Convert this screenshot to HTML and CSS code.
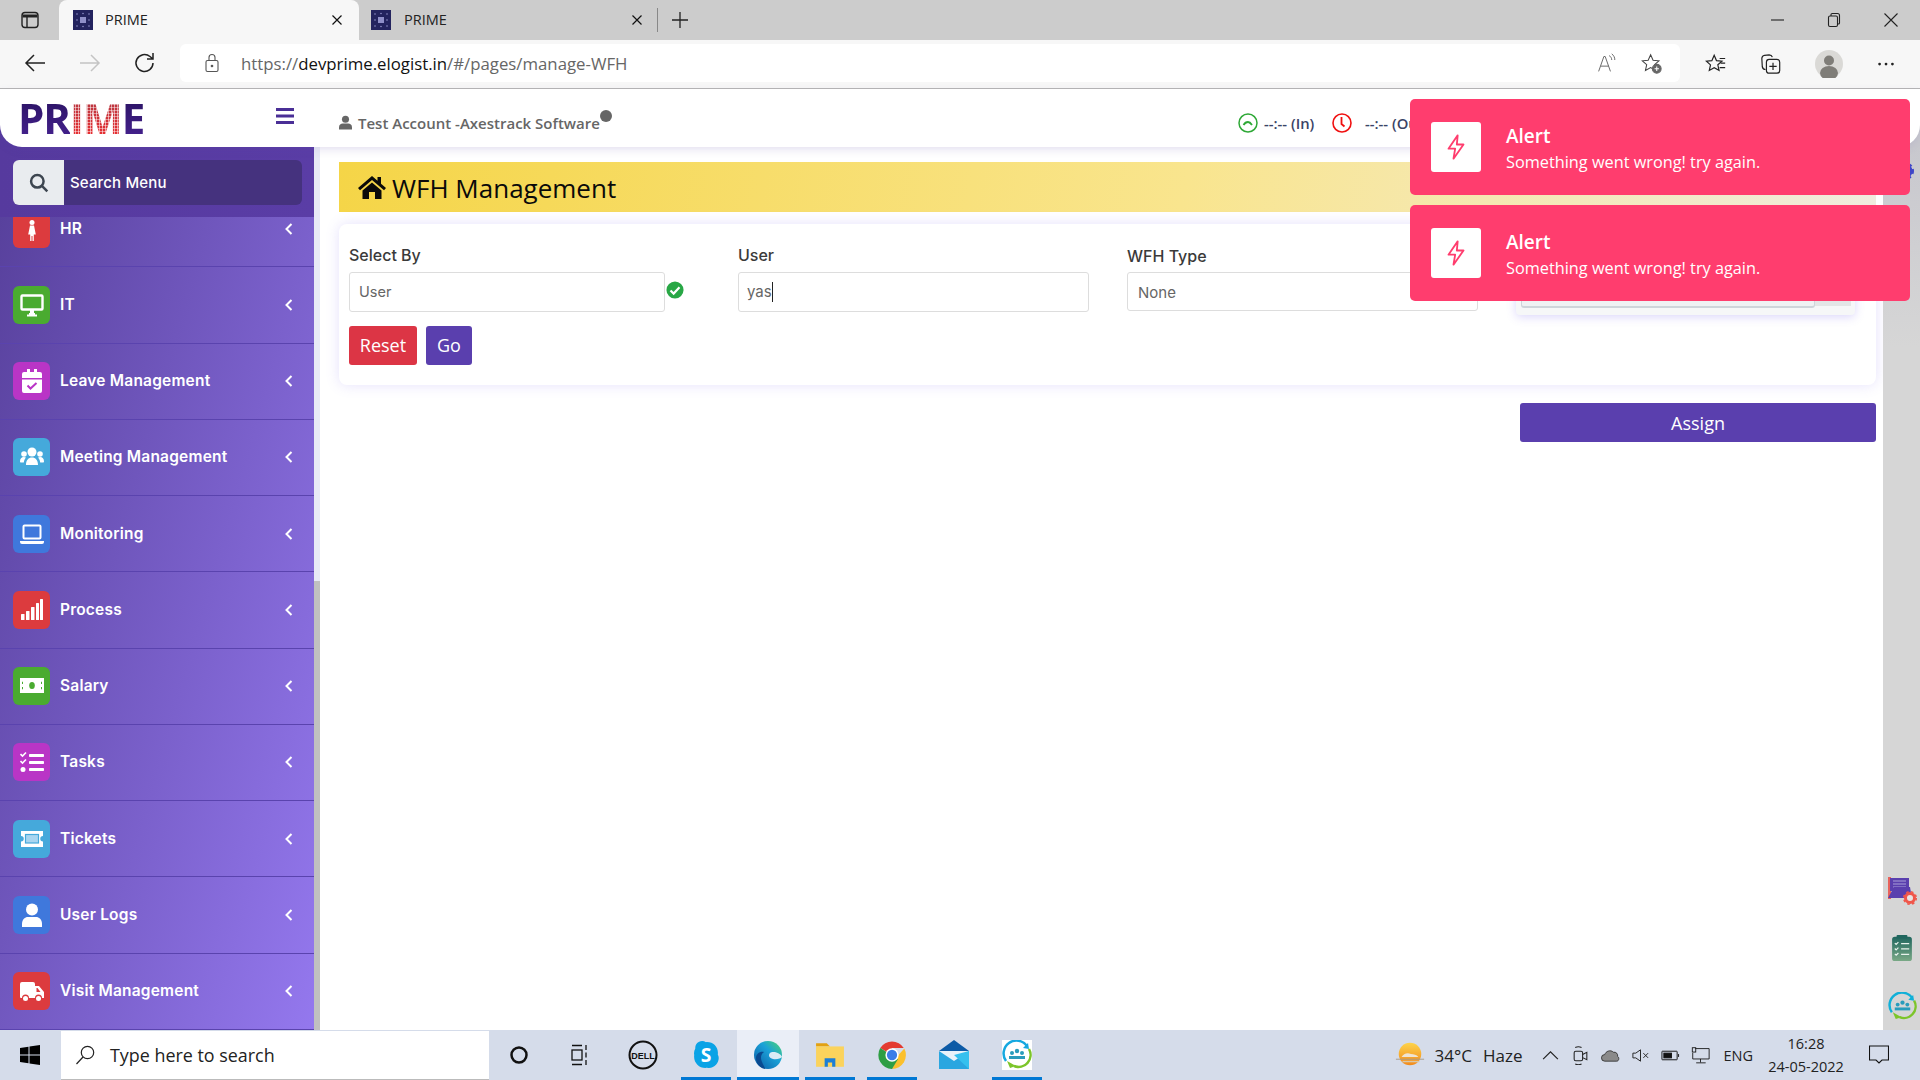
FILE: index.html
```html
<!DOCTYPE html>
<html lang="en">
<head>
<meta charset="utf-8">
<title>PRIME</title>
<link rel="stylesheet" href="styles.css">
</head>
<body>
<div class="tabstrip">
  <div class="tab-side"><svg width="20" height="20" viewBox="0 0 20 20" fill="none" stroke="#222" stroke-width="1.4"><rect x="2" y="2.5" width="16" height="15" rx="3"/><path d="M2.5 6h15" stroke-width="3"/><path d="M7 6v11"/></svg></div>
  <div class="tab tab-active">
    <svg class="favicon" viewBox="0 0 20 20"><rect width="20" height="20" fill="#23235e"/><g fill="#8f8fc8"><rect x="7" y="7" width="6" height="6"/><circle cx="4" cy="4" r=".8"/><circle cx="10" cy="3.5" r=".8"/><circle cx="16" cy="4" r=".8"/><circle cx="4" cy="10" r=".8"/><circle cx="16" cy="10" r=".8"/><circle cx="4" cy="16" r=".8"/><circle cx="10" cy="16.500" r=".8"/><circle cx="16" cy="16" r=".8"/></g></svg>
    <span class="tab-title">PRIME</span>
    <svg class="tab-x" viewBox="0 0 12 12" stroke="#111" stroke-width="1.2"><path d="M1.500 1.500l9 9M10.500 1.500l-9 9"/></svg>
  </div>
  <div class="tab">
    <svg class="favicon" viewBox="0 0 20 20"><rect width="20" height="20" fill="#23235e"/><g fill="#8f8fc8"><rect x="7" y="7" width="6" height="6"/><circle cx="4" cy="4" r=".8"/><circle cx="10" cy="3.5" r=".8"/><circle cx="16" cy="4" r=".8"/><circle cx="4" cy="10" r=".8"/><circle cx="16" cy="10" r=".8"/><circle cx="4" cy="16" r=".8"/><circle cx="10" cy="16.500" r=".8"/><circle cx="16" cy="16" r=".8"/></g></svg>
    <span class="tab-title">PRIME</span>
    <svg class="tab-x" viewBox="0 0 12 12" stroke="#111" stroke-width="1.2"><path d="M1.500 1.500l9 9M10.500 1.500l-9 9"/></svg>
  </div>
  <div class="tab-divider"></div>
  <svg class="tab-plus" viewBox="0 0 18 18" stroke="#222" stroke-width="1.3"><path d="M9 1v16M1 9h16"/></svg>
  <div class="win-controls">
    <svg viewBox="0 0 16 16" stroke="#222" stroke-width="1.1" fill="none"><path d="M2 8h13"/></svg>
    <svg viewBox="0 0 16 16" stroke="#222" stroke-width="1.1" fill="none"><rect x="2.500" y="4" width="9" height="10.500" rx="1.500"/><path d="M5 4V2.700c0-.7.5-1.200 1.200-1.200h5.300c1 0 2 1 2 2v7.500c0 .6-.6 1-1.200 1h-.8"/></svg>
    <svg viewBox="0 0 16 16" stroke="#222" stroke-width="1.1" fill="none"><path d="M1.500 1.500l13 13M14.500 1.500l-13 13"/></svg>
  </div>
</div>

<div class="toolbar">
  <div class="nav-buttons">
    <svg viewBox="0 0 24 24" fill="none" stroke="#222" stroke-width="1.500"><path d="M22 12H3M11 4l-8 8 8 8"/></svg>
    <svg viewBox="0 0 24 24" fill="none" stroke="#c4c4c4" stroke-width="1.500"><path d="M2 12h19M13 4l8 8-8 8"/></svg>
    <svg viewBox="0 0 24 24" fill="none" stroke="#222" stroke-width="1.500"><path d="M20 12a8.500 8.500 0 1 1-3-6.500L20 8M20 2v6h-6"/></svg>
  </div>
  <div class="address">
    <svg class="lock" viewBox="0 0 16 20" fill="none" stroke="#555" stroke-width="1.100"><rect x="2" y="7.500" width="12" height="11" rx="1.500"/><path d="M5 7.500V4.500a3 3 0 0 1 6 0v3"/><circle cx="8" cy="13" r=".8" fill="#555"/></svg>
    <span class="url"><span class="url-dim">https://</span>devprime.elogist.in<span class="url-dim">/#/pages/manage-WFH</span></span>
    <div class="address-icons">
      <svg viewBox="0 0 24 24" fill="none" stroke="#666" stroke-width="1.100"><path d="M3 21 9 4h1.500l6 17M5.500 15h9M15 3c2 1 3 3 3 5M18 1c2.500 2 3.500 4 3.500 7"/></svg>
      <svg viewBox="0 0 24 24" fill="none" stroke="#444" stroke-width="1.200"><path d="M11 2l2.800 6.200 6.700.7-5 4.500 1.400 6.600L11 16.700 5.100 20l1.400-6.600-5-4.500 6.700-.7z"/><circle cx="18" cy="18" r="5" fill="#666" stroke="#666"/><path d="M18 15.500v5M15.500 18h5" stroke="#fff"/></svg>
    </div>
  </div>
  <div class="tool-icons">
    <svg viewBox="0 0 24 24" fill="none" stroke="#222" stroke-width="1.300"><path d="M10 2.500l2.500 5.800 6 .6-4.500 4 1.300 6L10 16l-5.300 3 1.300-6-4.500-4 6-.6z"/><path d="M16 6h6M17 11h5M16 16h6"/></svg>
    <svg viewBox="0 0 24 24" fill="none" stroke="#222" stroke-width="1.300"><path d="M6 18c-2 0-3-1-3.500-3L2 6c0-2 1-3 3-3.500L10 2c2 0 3 1 3.500 2.500"/><rect x="7" y="7" width="14.500" height="15" rx="3"/><path d="M14.200 10.500v8M10.200 14.500h8"/></svg>
    <svg class="avatar" viewBox="0 0 28 28"><circle cx="14" cy="14" r="14" fill="#dad9d6"/><circle cx="14" cy="10.500" r="5" fill="#7f7d78"/><ellipse cx="14" cy="23" rx="9" ry="7" fill="#7f7d78"/></svg>
    <svg viewBox="0 0 24 24" fill="#222"><circle cx="5" cy="12" r="1.500"/><circle cx="12" cy="12" r="1.500"/><circle cx="19" cy="12" r="1.500"/></svg>
  </div>
</div>

<div class="app">
  <header class="app-header">
    <div class="logo"><span class="logo-dark">PR</span><span class="logo-red">IM</span><span class="logo-dark">E</span></div>
    <svg class="hamburger" viewBox="0 0 18 16" fill="#4a2f96"><rect width="18" height="3"/><rect y="6.500" width="18" height="3"/><rect y="13" width="18" height="3"/></svg>
    <div class="account">
      <svg viewBox="0 0 14 15" fill="#666"><circle cx="7" cy="4" r="3.800"/><path d="M0 15v-2.500C0 9.800 2 8.500 4 8.500h6c2 0 4 1.300 4 4V15z"/></svg>
      <span class="account-name">Test Account -Axestrack Software</span><span class="status-dot"></span>
    </div>
    <div class="clock-in">
      <svg viewBox="0 0 20 20" fill="none" stroke="#2ea836" stroke-width="1.500"><circle cx="10" cy="10" r="9"/><path d="M5.500 12c1.500-2.500 3-3 4.500-3s2.500.8 4 3" stroke-width="1.800"/></svg>
      <span>--:-- (In)</span>
    </div>
    <div class="clock-out">
      <svg viewBox="0 0 20 20" fill="none" stroke="#f01010" stroke-width="1.600"><circle cx="10" cy="10" r="9"/><path d="M9.500 4v7l3 2.500" stroke-width="1.800"/></svg>
      <span>--:-- (Out)</span>
    </div>
  </header>

  <div class="app-body">
    <aside class="sidebar">
      <div class="search-block">
        <div class="search">
          <div class="search-btn"><svg viewBox="0 0 24 24" fill="none" stroke="#3d4650" stroke-width="3"><circle cx="10" cy="10" r="7.500"/><path d="M15.500 15.500 22 22"/></svg></div>
          <span>Search Menu</span>
        </div>
      </div>
      <nav class="menu">
        <a class="menu-row"><span class="tile t-red"><svg viewBox="0 0 24 24" fill="#fff"><circle cx="12" cy="5.500" r="2.500"/><path d="M10 8.500h4l1.800 9h-2v6.500h-1.300v-5h-1v5h-1.300v-6.500h-2z"/></svg></span><span class="menu-label">HR</span><svg class="chev" viewBox="0 0 8 12" fill="none" stroke="#fff" stroke-width="2"><path d="M6.500 1 1.500 6l5 5"/></svg></a>
        <a class="menu-row"><span class="tile t-green"><svg viewBox="0 0 24 24" fill="none" stroke="#fff"><rect x="1.500" y="2.500" width="21" height="14" rx="1" stroke-width="2.400"/><path d="M9 21h6M7 22.500h10" stroke-width="2"/><path d="M10 17h4v4h-4z" fill="#fff" stroke="none"/></svg></span><span class="menu-label">IT</span><svg class="chev" viewBox="0 0 8 12" fill="none" stroke="#fff" stroke-width="2"><path d="M6.500 1 1.500 6l5 5"/></svg></a>
        <a class="menu-row"><span class="tile t-purple"><svg viewBox="0 0 24 24" fill="#fff"><path d="M2 5a2 2 0 0 1 2-2h3V0h3v3h4V0h3v3h3a2 2 0 0 1 2 2v4H2zM2 10.500h20V22a2 2 0 0 1-2 2H4a2 2 0 0 1-2-2z"/><path d="M7.500 16.500l3 3 6-5.500" fill="none" stroke="#b935c6" stroke-width="2"/></svg></span><span class="menu-label">Leave Management</span><svg class="chev" viewBox="0 0 8 12" fill="none" stroke="#fff" stroke-width="2"><path d="M6.500 1 1.500 6l5 5"/></svg></a>
        <a class="menu-row"><span class="tile t-sky"><svg viewBox="0 0 24 24" fill="#fff"><circle cx="12" cy="7" r="4.500"/><circle cx="4" cy="9" r="2.800"/><circle cx="20" cy="9" r="2.800"/><path d="M6 20c0-5 2.500-7.500 6-7.500s6 2.500 6 7.500zM0 16.500c0-3 1.500-4.500 3.800-4.500 1 0 1.700.3 2.200.8-1.200 1-2 2.500-2.200 4.700H1c-.6 0-1-.4-1-1zM24 16.500c0-3-1.500-4.500-3.800-4.500-1 0-1.700.3-2.200.8 1.200 1 2 2.500 2.200 4.700H23c.6 0 1-.4 1-1z"/></svg></span><span class="menu-label">Meeting Management</span><svg class="chev" viewBox="0 0 8 12" fill="none" stroke="#fff" stroke-width="2"><path d="M6.500 1 1.500 6l5 5"/></svg></a>
        <a class="menu-row"><span class="tile t-blue"><svg viewBox="0 0 24 24" fill="none" stroke="#fff"><rect x="3.500" y="3.500" width="17" height="13" rx="1" stroke-width="2"/><path d="M0 19h24v1a2 2 0 0 1-2 2H2a2 2 0 0 1-2-2z" fill="#fff" stroke="none"/></svg></span><span class="menu-label">Monitoring</span><svg class="chev" viewBox="0 0 8 12" fill="none" stroke="#fff" stroke-width="2"><path d="M6.500 1 1.500 6l5 5"/></svg></a>
        <a class="menu-row"><span class="tile t-red"><svg viewBox="0 0 24 24" fill="#fff"><rect x="1" y="16" width="3.500" height="6" rx=".5"/><rect x="6" y="13" width="3.500" height="9" rx=".5"/><rect x="11" y="9" width="3.500" height="13" rx=".5"/><rect x="16" y="5" width="3" height="17" rx=".5"/><rect x="20" y="1" width="3" height="21" rx=".5"/></svg></span><span class="menu-label">Process</span><svg class="chev" viewBox="0 0 8 12" fill="none" stroke="#fff" stroke-width="2"><path d="M6.500 1 1.500 6l5 5"/></svg></a>
        <a class="menu-row"><span class="tile t-green"><svg viewBox="0 0 24 24"><rect y="4" width="24" height="15" fill="#fff"/><ellipse cx="12" cy="11.500" rx="2.800" ry="3.500" fill="#4aab30"/><path d="M3 8h-.5v2M3 15h-.5v-2M21 8h.5v2M21 15h.5v-2" stroke="#4aab30" fill="none"/></svg></span><span class="menu-label">Salary</span><svg class="chev" viewBox="0 0 8 12" fill="none" stroke="#fff" stroke-width="2"><path d="M6.500 1 1.500 6l5 5"/></svg></a>
        <a class="menu-row"><span class="tile t-purple"><svg viewBox="0 0 24 24" fill="#fff"><rect x="9" y="4" width="15" height="3" rx=".8"/><rect x="9" y="11" width="15" height="3" rx=".8"/><rect x="9" y="18" width="15" height="3" rx=".8"/><circle cx="3" cy="19.500" r="2.500"/><path d="M.5 4l2 2 3.500-3.500M.5 11l2 2 3.500-3.500" fill="none" stroke="#fff" stroke-width="1.600"/></svg></span><span class="menu-label">Tasks</span><svg class="chev" viewBox="0 0 8 12" fill="none" stroke="#fff" stroke-width="2"><path d="M6.500 1 1.500 6l5 5"/></svg></a>
        <a class="menu-row"><span class="tile t-sky"><svg viewBox="0 0 24 24"><path d="M1 4h22v5a2.500 2.500 0 0 0 0 5.500V20H1v-5.500A2.500 2.500 0 0 0 1 9z" fill="#fff"/><rect x="5.500" y="7.500" width="13" height="8.500" fill="#a8d5f0" stroke="#45a9db" stroke-width="1.200"/></svg></span><span class="menu-label">Tickets</span><svg class="chev" viewBox="0 0 8 12" fill="none" stroke="#fff" stroke-width="2"><path d="M6.500 1 1.500 6l5 5"/></svg></a>
        <a class="menu-row"><span class="tile t-blue"><svg viewBox="0 0 24 24" fill="#fff"><circle cx="12" cy="6.500" r="6"/><path d="M2 24v-3c0-4.500 3-7 6-7h8c3 0 6 2.500 6 7v3z"/></svg></span><span class="menu-label">User Logs</span><svg class="chev" viewBox="0 0 8 12" fill="none" stroke="#fff" stroke-width="2"><path d="M6.500 1 1.500 6l5 5"/></svg></a>
        <a class="menu-row"><span class="tile t-red"><svg viewBox="0 0 24 24" fill="#fff"><path d="M0 5a2 2 0 0 1 2-2h11a2 2 0 0 1 2 2v2h4l5 6v6h-2a3.500 3.500 0 0 0-7 0H9a3.500 3.500 0 0 0-7 0H1a1 1 0 0 1-1-1z"/><path d="M16.500 9v4h4l-3-4z" fill="#dc3b3e"/><circle cx="5.500" cy="19.500" r="2.500"/><circle cx="18.500" cy="19.500" r="2.500"/></svg></span><span class="menu-label">Visit Management</span><svg class="chev" viewBox="0 0 8 12" fill="none" stroke="#fff" stroke-width="2"><path d="M6.500 1 1.500 6l5 5"/></svg></a>
      </nav>
    </aside>
    <div class="sidebar-scroll"><div class="sidebar-thumb"></div></div>

    <main class="content">
      <div class="page-title">
        <svg viewBox="0 0 28 24" fill="#0a0a0a"><path d="M14 1 0 13l2 2.200L14 5l12 10.200 2-2.200-5-4.300V2h-3.500v3.700z"/><path d="M4.500 15.500 14 7.500l9.500 8V24H17v-7h-6v7H4.500z"/></svg>
        <h1>WFH Management</h1>
      </div>
      <section class="card">
        <div class="form-grid">
          <div class="field">
            <label>Select By</label>
            <div class="with-check">
              <div class="input input-short">User</div>
              <svg class="check" viewBox="0 0 20 20"><circle cx="10" cy="10" r="9.500" fill="#28a745"/><path d="M5 10.500l3.500 3.500L15 7" fill="none" stroke="#fff" stroke-width="2.400"/></svg>
            </div>
          </div>
          <div class="field">
            <label>User</label>
            <div class="input input-user"><span class="caret">yas</span></div>
          </div>
          <div class="field field-wfh">
            <label>WFH Type</label>
            <div class="input">None</div>
          </div>
          <div class="field-range">
            <div class="range-box"><div class="range-input"></div><div class="range-addon"></div></div>
          </div>
        </div>
        <div class="form-actions">
          <button class="btn btn-reset">Reset</button>
          <button class="btn btn-go">Go</button>
        </div>
      </section>
      <div class="assign-row"><button class="btn-assign">Assign</button></div>
    </main>

    <div class="side-rail"></div>
  </div>

  <svg class="rail-gear" viewBox="0 0 18 18"><circle cx="9" cy="9" r="6" fill="none" stroke="#3f46c8" stroke-width="3"/><circle cx="9" cy="9" r="8" fill="none" stroke="#3f46c8" stroke-width="2" stroke-dasharray="3 3"/></svg>

  <div class="toasts">
    <div class="toast">
      <div class="toast-icon"><svg viewBox="0 0 24 32" fill="none" stroke="#ff3d6e" stroke-width="2.200" stroke-linejoin="round"><path d="M14 2 3 18h8l-2 12 12-17h-8z"/></svg></div>
      <div class="toast-text"><div class="toast-title">Alert</div><div class="toast-msg">Something went wrong! try again.</div></div>
    </div>
    <div class="toast">
      <div class="toast-icon"><svg viewBox="0 0 24 32" fill="none" stroke="#ff3d6e" stroke-width="2.200" stroke-linejoin="round"><path d="M14 2 3 18h8l-2 12 12-17h-8z"/></svg></div>
      <div class="toast-text"><div class="toast-title">Alert</div><div class="toast-msg">Something went wrong! try again.</div></div>
    </div>
  </div>

  <div class="float-icons">
    <svg viewBox="0 0 30 28"><rect x="1" y="0" width="3" height="22" fill="#e8635c"/><path d="M3 1h19v13H3z" fill="#5a3fae"/><path d="M6 4h13M6 7h13M6 10h13" stroke="#a8a0d8"/><path d="M7 10h16l1 6v5H1z" fill="#5a3fae"/><circle cx="23" cy="21" r="4.500" fill="#e9e4e4" stroke="#f0564a" stroke-width="3"/><circle cx="23" cy="21" r="6.300" fill="none" stroke="#f0564a" stroke-width="1.500" stroke-dasharray="2.500 2.500"/></svg>
    <svg viewBox="0 0 24 30"><rect x="1" y="2" width="22" height="27" rx="3" fill="url(#clip)"/><defs><linearGradient id="clip" x1="0" y1="0" x2="0" y2="1"><stop offset="0" stop-color="#20665e"/><stop offset="1" stop-color="#7aa986"/></linearGradient></defs><rect x="6" y="0" width="12" height="4" rx="1" fill="#20665e"/><path d="M4 9l1.500 1.500L8 8M4 15l1.500 1.500L8 14M4 21l1.500 1.500L8 20M11 9.500h9M11 15.500h9M11 21.500h9" stroke="#e8f2ec" stroke-width="1.300" fill="none"/></svg>
    <svg viewBox="0 0 30 30"><path d="M4 21A12 12 0 0 1 25 6" fill="none" stroke="#10b0d8" stroke-width="2.500"/><path d="M27 9A12 12 0 0 1 12 26" fill="none" stroke="#7cc52a" stroke-width="2.500"/><path d="M5 21l3 7 6-2z" fill="#7cc52a"/><path d="M26 3l1 6-6-1z" fill="#10b0d8"/><g fill="#2a9cbc"><circle cx="10" cy="13" r="2"/><circle cx="15" cy="11" r="2.200"/><circle cx="20" cy="13" r="2"/><rect x="7" y="16" width="16" height="3"/></g></svg>
  </div>
</div>

<footer class="taskbar">
  <svg class="start" viewBox="0 0 20 20" fill="#000"><path d="M0 3l8.500-1.200V9.500H0zM9.500 1.600 20 0v9.500H9.500zM0 10.500h8.500v7.700L0 17zM9.500 10.500H20V20L9.500 18.400z"/></svg>
  <div class="task-search">
    <svg viewBox="0 0 20 20" fill="none" stroke="#222" stroke-width="1.200"><circle cx="12.500" cy="7.500" r="6.200"/><path d="M8 12 1.500 19"/></svg>
    <span>Type here to search</span>
  </div>
  <div class="task-apps">
    <div class="task-app task-plain"><svg viewBox="0 0 20 20" fill="none" stroke="#111" stroke-width="2.500"><circle cx="10" cy="10" r="7.500"/></svg></div>
    <div class="task-app task-plain"><svg viewBox="0 0 20 22" fill="none" stroke="#111" stroke-width="1.300"><path d="M1 1.500h10M1 20.500h10"/><rect x="1" y="6" width="10" height="10"/><path d="M15 1v5M15 8.500v5M15 16v5"/></svg></div>
    <div class="task-app"><svg viewBox="0 0 30 30"><circle cx="15" cy="15" r="13.500" fill="none" stroke="#111" stroke-width="2"/><text x="15" y="18.500" text-anchor="middle" class="dell">DELL</text></svg></div>
    <div class="task-app task-on"><svg viewBox="0 0 28 28"><path d="M4 8a6.500 6.500 0 0 1 10-6c7-.5 12 5 11 11.500 3 5 -2 14-10 12.500C8 27 2 21 3 14 2.500 12 3 10 4 8z" fill="#0aa3e6"/><text x="14" y="20.500" text-anchor="middle" class="skype">S</text></svg></div>
    <div class="task-app task-on task-active"><svg viewBox="0 0 30 30"><defs><linearGradient id="edge" x1="0" y1="1" x2="1" y2="0"><stop offset="0" stop-color="#0c59a4"/><stop offset=".6" stop-color="#1ba2d8"/><stop offset="1" stop-color="#4fd86a"/></linearGradient></defs><circle cx="15" cy="15" r="14" fill="url(#edge)"/><path d="M29 17c-1 1-5 3-9 2-4-1-5-4-3-6 2-2 10-1 12 4z" fill="#f0f3fa" opacity=".9"/><path d="M12 29c-5-1-9-5-9-11 0-4 4-7 8-6-3 2-4 6-2 10 1 3 3 5 3 7z" fill="#0a4a90"/></svg></div>
    <div class="task-app task-on"><svg viewBox="0 0 28 28"><path d="M1 3h10l3 3H1z" fill="#e2a112"/><rect x="1" y="6" width="26" height="19" fill="#fbd35c"/><path d="M9 25v-8h10v8h-3v-4h-4v4z" fill="#1d7fd6"/></svg></div>
    <div class="task-app task-on"><svg viewBox="0 0 28 28"><path d="M14 14 3 7.500A13 13 0 0 1 25 7.500H14z" fill="#e43b30"/><path d="M14 27a13 13 0 0 0 11.500-19L20 14z" fill="#fbc02d"/><path d="M3 7.500A13 13 0 0 0 14 27l5.500-9z" fill="#2e9e44"/><circle cx="14" cy="14" r="6.200" fill="#fff"/><circle cx="14" cy="14" r="4.800" fill="#3b7de8"/></svg></div>
    <div class="task-app"><svg viewBox="0 0 30 30"><path d="M0 11 15 0l15 11z" fill="#0c5aa6"/><rect y="11" width="30" height="18" fill="#2aa6e0"/><path d="M0 11h30L15 21z" fill="#e8f2fa"/><path d="M30 29 15 15 30 11z" fill="#35c0ee"/></svg></div>
    <div class="task-app task-on"><svg viewBox="0 0 30 30"><rect width="30" height="30" fill="#fff"/><path d="M4 21A12 12 0 0 1 25 6" fill="none" stroke="#16a8e0" stroke-width="2.500"/><path d="M27 9A12 12 0 0 1 12 26" fill="none" stroke="#7cc52a" stroke-width="2.500"/><path d="M5 21l3 7 6-2z" fill="#7cc52a"/><path d="M26 3l1 6-6-1z" fill="#16a8e0"/><g fill="#2a9cbc"><circle cx="10" cy="13" r="2"/><circle cx="15" cy="11" r="2.200"/><circle cx="20" cy="13" r="2"/><rect x="7" y="16" width="16" height="3"/></g></svg></div>
  </div>
  <div class="tray">
    <svg class="tray-sun" viewBox="0 0 32 26"><defs><linearGradient id="sun" x1="0" y1="0" x2="0" y2="1"><stop offset="0" stop-color="#fdd34a"/><stop offset="1" stop-color="#f28a1c"/></linearGradient></defs><circle cx="16" cy="12" r="12" fill="url(#sun)"/><path d="M7 15c2-3 6-5 10-3 3 0 6 1 8 3z" fill="#efe4d2"/><path d="M1 17.500h30" stroke="#a89a86" stroke-width="1"/><path d="M8 20h18" stroke="#d8c8ac" stroke-width="1.500"/></svg>
    <span class="tray-temp">34°C</span>
    <span class="tray-haze">Haze</span>
    <div class="tray-icons">
      <svg viewBox="0 0 18 18" fill="none" stroke="#222" stroke-width="1.100"><path d="M2 12.500 9 5.500l7 7"/></svg>
      <svg viewBox="0 0 18 18" fill="none" stroke="#222" stroke-width="1"><rect x="3" y="5" width="8" height="9" rx="1.500"/><path d="M11 8l4-2v7l-4-2M4 1.500c2-1 4-1 6 0M4 17c2 1 4 1 6 0"/></svg>
      <svg viewBox="0 0 20 18"><path d="M4 15a3.500 3.500 0 0 1 0-7c1-3.500 6-5.500 9-2.500 3-.5 5 2 4.500 4.500 2 1 1.500 5-1 5z" fill="#8a8a8a" stroke="#222" stroke-width=".8"/></svg>
      <svg viewBox="0 0 20 18" fill="none" stroke="#222" stroke-width="1"><path d="M2 6.500h3L10 3v12L5 11.500H2zM13 6.500l5 5M18 6.500l-5 5"/></svg>
      <svg viewBox="0 0 20 18" fill="none" stroke="#111" stroke-width="1"><rect x="1" y="4.500" width="16" height="9" rx=".5"/><rect x="3" y="6.500" width="8" height="5" fill="#111"/><path d="M18.500 7.500v3"/></svg>
      <svg viewBox="0 0 22 20" fill="none" stroke="#111" stroke-width="1"><path d="M5 2h16v12H2V7M11 14v4M6 18.500h11"/><rect x="1.500" y="1" width="4" height="5"/></svg>
    </div>
    <span class="tray-lang">ENG</span>
    <div class="tray-clock"><span>16:28</span><span>24-05-2022</span></div>
    <svg class="tray-note" viewBox="0 0 20 20" fill="none" stroke="#111" stroke-width="1.100"><path d="M.5 1h19v14H13l-3 3-3-3H.5z"/></svg>
  </div>
</footer>
</body>
</html>
```

FILE: styles.css
```css
* { box-sizing: border-box; }
html, body { margin: 0; padding: 0; }
body {
  width: 1920px;
  height: 1080px;
  overflow: hidden;
  display: flex;
  flex-direction: column;
  font-family: "Open Sans", "Liberation Sans", sans-serif;
  background: #fff;
}
svg { display: block; flex: none; }

/* Browser chrome */
.tabstrip { height: 40px; background: #cccccc; display: flex; align-items: center; flex: none; }
.tab-side { width: 59px; display: flex; justify-content: center; }
.tab { width: 300px; height: 40px; display: flex; align-items: center; padding: 0 14px; }
.tab + .tab { width: 298px; padding: 0 12px; }
.tab-active { background: #f7f7f7; border-radius: 8px 8px 0 0; }
.favicon { width: 20px; height: 20px; }
.tab-title { margin-left: 12px; font-size: 14.500px; color: #222; flex: 1; padding-bottom: 2px; }
.tab + .tab .tab-title { margin-left: 13px; }
.tab-x { width: 12px; height: 12px; margin-right: 2px; }
.tab-divider { width: 1px; height: 24px; background: #888; }
.tab-plus { width: 18px; height: 18px; margin-left: 13px; }
.win-controls { margin-left: auto; display: flex; gap: 41px; padding-right: 21px; }
.win-controls svg { width: 16px; height: 16px; }

.toolbar { height: 49px; background: #f7f7f7; border-bottom: 1px solid #b5b5b5; display: flex; align-items: center; flex: none; padding-bottom: 2px; }
.nav-buttons { width: 180px; display: flex; gap: 31px; padding-left: 23px; }
.nav-buttons svg { width: 24px; height: 24px; }
.address { width: 1500px; height: 38px; background: #fff; border-radius: 6px; display: flex; align-items: center; padding-left: 24px; }
.lock { width: 16px; height: 20px; }
.url { margin-left: 21px; font-size: 16.800px; color: #111; }
.url-dim { color: #666; }
.address-icons { margin-left: auto; display: flex; gap: 24px; padding-right: 18px; }
.address-icons svg { width: 21px; height: 21px; }
.tool-icons { display: flex; align-items: center; padding-left: 25px; padding-top: 2px; gap: 33px; }
.tool-icons svg { width: 22px; height: 22px; }
.tool-icons .avatar { width: 28px; height: 28px; margin-right: -1px; }

/* App */
.app {
  flex: 1;
  min-height: 0;
  display: flex;
  flex-direction: column;
  position: relative;
  background: linear-gradient(90deg, #553a9e 0 40px, #fff 40px 1880px, #c8c8ce 1880px);
}
.app-header {
  height: 58px;
  flex: none;
  background: #fff;
  border-radius: 0 0 22px 22px;
  display: flex;
  align-items: center;
  position: relative;
  z-index: 3;
  box-shadow: 0 3px 10px rgba(90, 70, 170, .1);
}
.logo { width: 276px; padding-left: 18px; font-size: 42px; font-weight: 700; line-height: 48px; letter-spacing: -1px; flex: none; padding-bottom: 1px; }
.logo-dark { background: linear-gradient(#25105a, #4a2496); -webkit-background-clip: text; background-clip: text; color: transparent; }
.logo-red {
  background:
    repeating-linear-gradient(90deg, transparent 0 2px, rgba(255,255,255,.55) 2px 3px),
    repeating-linear-gradient(0deg, transparent 0 2px, rgba(255,255,255,.45) 2px 3px),
    linear-gradient(#a83a48, #f52c2c);
  -webkit-background-clip: text;
  background-clip: text;
  color: transparent;
}
.hamburger { width: 18px; height: 16px; margin-top: -4px; }
.account { margin-left: 45px; display: flex; align-items: center; font-size: 15px; font-weight: 600; color: #666; width: 900px; flex: none; padding-top: 9px; }
.account svg { width: 13px; height: 15px; margin-right: 6px; }
.account-name { white-space: nowrap; }
.status-dot { width: 12px; height: 12px; border-radius: 50%; background: #666; margin-top: -14px; flex: none; }
.clock-in, .clock-out { display: flex; align-items: center; font-size: 14.800px; font-weight: 600; color: #3a4466; padding-top: 9px; white-space: nowrap; }
.clock-in svg, .clock-out svg { width: 20px; height: 20px; }
.clock-in { width: 94px; gap: 6px; margin-left: -1px; }
.clock-out { gap: 13px; }

.app-body { flex: 1; min-height: 0; display: flex; }

.sidebar {
  width: 314px;
  flex: none;
  display: flex;
  flex-direction: column;
  overflow: hidden;
  background: linear-gradient(106deg, #563f9a 0%, #9478ee 100%);
}
.search-block { height: 70px; flex: none; background: linear-gradient(90deg, #563a9e, #5a3da6); padding: 13px; position: relative; z-index: 2; }
.search { height: 45px; width: 289px; border-radius: 6px; background: #45327e; display: flex; align-items: center; overflow: hidden; color: #fff; font-family: Inter, "Open Sans", sans-serif; font-size: 15px; font-weight: 500; letter-spacing: .15px; }
.search-btn { width: 51px; height: 45px; background: #e9ecef; display: flex; align-items: center; justify-content: center; margin-right: 6px; }
.search-btn svg { width: 20px; height: 20px; }
.menu { margin-top: -26px; }
.menu-row {
  height: 76.27px;
  display: flex;
  align-items: center;
  padding-left: 13px;
  border-bottom: 1px solid #5a43ae;
  color: #fff;
  font-family: Inter, "Open Sans", sans-serif;
  font-size: 15.500px;
  font-weight: 600;
}
.tile { width: 37px; height: 38px; border-radius: 6px; display: flex; align-items: center; justify-content: center; flex: none; }
.tile svg { width: 24px; height: 24px; }
.t-red { background: #dc3b3e; }
.t-green { background: #4aab30; }
.t-purple { background: #b935c6; }
.t-sky { background: #45a9db; }
.t-blue { background: #3f78dc; }
.menu-label { margin-left: 10px; flex: 1; letter-spacing: .2px; padding-bottom: 1px; }
.chev { width: 8px; height: 12px; margin-right: 21px; }

.sidebar-scroll { width: 6px; flex: none; display: flex; flex-direction: column; justify-content: flex-end; background: #e8eaf6; }
.sidebar-thumb { height: 449px; background: #c0c0c0; }

.content { flex: 1; min-width: 0; padding: 15px 7px 0 19px; display: flex; flex-direction: column; background: #fff; box-shadow: inset 0 10px 10px -10px rgba(90, 70, 170, .1); }
.page-title { height: 50px; flex: none; display: flex; align-items: center; padding-left: 19px; background: linear-gradient(100deg, #f5d547 0%, #f9e58e 55%, #f0ecdf 100%); }
.page-title svg { width: 28px; height: 24px; margin-right: 6px; }
.page-title h1 { margin: 0; padding-top: 1px; font-size: 26px; font-weight: 500; color: #0a0a0a; line-height: 1; }
.card { margin-top: 12px; height: 161px; flex: none; border-radius: 8px; background: #fff; padding: 19px 21px 0 10px; box-shadow: 0 0 14px rgba(110, 90, 240, .18); font-family: Inter, "Open Sans", sans-serif; }
.form-grid { display: grid; grid-template-columns: 351px 351px 351px 339px; column-gap: 38px; height: 72px; }
.field label { display: block; height: 24px; line-height: 24px; margin-bottom: 5px; font-size: 16px; font-weight: 500; color: #3a3a3a; }
.field-wfh label { padding-top: 0; margin-top: 1px; margin-bottom: 4px; }
.with-check { display: flex; align-items: center; }
.input { height: 40px; border: 1px solid #ddd; border-radius: 3px; padding: 0 9px; display: flex; align-items: center; font-size: 15px; color: #666; background: #fff; }
.input-short { width: 316px; font-size: 14.500px; padding-bottom: 2px; }
.input-user { padding-left: 8px; }
.field-wfh .input { height: 39px; padding: 2px 0 0 10px; }
.caret { border-right: 1px solid #222; line-height: 20px; }
.check { width: 18px; height: 18px; margin-left: 1px; margin-top: -4px; }
.field-range { padding-top: 29px; }
.range-box { height: 43px; background: #f6f7f8; border-radius: 4px; padding: 4px 4px 7px 5px; display: flex; box-shadow: 0 2px 10px rgba(110, 90, 240, .25); }
.range-input { width: 294px; background: #eff1f3; border: 1px solid #ced4da; border-width: 0 1.500px 2px 1.500px; border-radius: 0 0 3px 3px; }
.range-addon { flex: 1; background: #e3e5e6; margin-bottom: 2px; }
.form-actions { margin-top: 11px; display: flex; gap: 9px; }
.btn { height: 39px; border: 0; border-radius: 3px; color: #fff; font-family: "Open Sans", sans-serif; font-size: 18px; padding: 0 0 2px; }
.btn-reset { width: 68px; background: #dc3545; }
.btn-go { width: 46px; background: #5a3fae; }
.assign-row { margin-top: 18px; display: flex; justify-content: flex-end; }
.btn-assign { width: 356px; height: 39px; border: 0; border-radius: 3px; background: #5a3fae; color: #fff; font-family: "Open Sans", sans-serif; font-size: 18px; }
.side-rail { width: 37px; flex: none; background: linear-gradient(#c8c8ce, #d6d6d6 200px); }

/* Overlays */
.rail-gear { position: absolute; left: 1896px; top: 73px; width: 18px; height: 18px; z-index: 4; }
.toasts { position: absolute; left: 1410px; top: 10px; width: 500px; display: flex; flex-direction: column; gap: 10px; z-index: 5; }
.toast { height: 96px; background: #ff3d6e; border-radius: 5px; display: flex; align-items: center; padding: 0 0 0 21px; color: #fff; }
.toast-icon { width: 50px; height: 50px; background: #fff; border-radius: 3px; display: flex; align-items: center; justify-content: center; margin-right: 25px; flex: none; }
.toast-icon svg { width: 20px; height: 28px; }
.toast-text { padding-top: 4px; }
.toast-title { font-size: 19px; font-weight: 600; line-height: 26px; }
.toast-msg { font-size: 16.300px; line-height: 26px; }
.float-icons { position: absolute; left: 1887px; top: 788px; width: 30px; display: flex; flex-direction: column; align-items: center; gap: 30px; z-index: 4; }
.float-icons svg:nth-child(1) { width: 30px; height: 28px; }
.float-icons svg:nth-child(2) { width: 22px; height: 27px; }
.float-icons svg:nth-child(3) { width: 29px; height: 29px; }

/* Taskbar */
.taskbar { height: 50px; flex: none; background: #d5dcea; display: flex; align-items: center; }
.start { width: 20px; height: 20px; margin-left: 20px; margin-right: 21px; }
.task-search { width: 428px; height: 49px; margin-top: 1px; background: #fff; display: flex; align-items: center; padding-left: 14px; font-size: 17.900px; color: #222; border-bottom: 1px solid #bbb; }
.task-search svg { width: 20px; height: 20px; margin-right: 15px; }
.task-apps { display: flex; margin-left: -1px; }
.task-app { width: 62.200px; height: 50px; display: flex; align-items: center; justify-content: center; }
.task-app svg { width: 30px; height: 30px; }
.task-plain svg { width: 20px; height: 22px; }
.task-on { background: linear-gradient(#0078d4, #0078d4) center bottom / 50px 3px no-repeat; }
.task-active { background: linear-gradient(#0078d4, #0078d4) center bottom / 62px 3px no-repeat, #eaeef7; }
.dell { font-family: "Liberation Sans", sans-serif; font-size: 9px; font-weight: 700; fill: #111; }
.skype { font-family: "Open Sans", sans-serif; font-size: 18px; font-weight: 700; fill: #fff; }
.tray { margin-left: auto; display: flex; align-items: center; font-size: 17px; color: #222; padding-right: 31px; }
.tray-sun { width: 30px; height: 26px; }
.tray-temp { margin-left: 10px; }
.tray-haze { margin-left: 11px; }
.tray-icons { display: flex; align-items: center; gap: 11px; margin-left: 19px; }
.tray-icons svg { width: 19px; height: 19px; }
.tray-lang { font-size: 14.500px; margin-left: 13px; }
.tray-clock { width: 92px; margin-left: 7px; display: flex; flex-direction: column; align-items: center; font-size: 14.500px; line-height: 23px; }
.tray-note { width: 20px; height: 20px; margin-left: 17px; }
```
